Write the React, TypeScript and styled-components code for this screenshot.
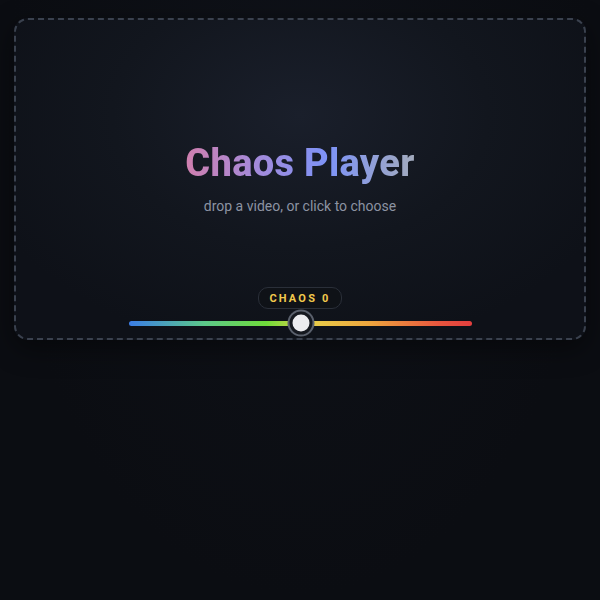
import React, { useState } from "react"
import styled, { createGlobalStyle } from "styled-components"

const GlobalStyle = createGlobalStyle`
    html, body {
        margin: 0;
        padding: 0;
        background: #0b0d12;
        font-family: Roboto, "Liberation Sans", sans-serif;
    }
`

const Page = styled.div`
    width: 600px;
    height: 600px;
    padding: 18px 14px 0;
    box-sizing: border-box;
    background: radial-gradient(ellipse at 50% 20%, #0f1219 0%, #0b0d12 70%);
`

const DropZone = styled.label`
    display: flex;
    flex-direction: column;
    align-items: center;
    height: 322px;
    box-sizing: border-box;
    border: 2px dashed #3a414e;
    border-radius: 14px;
    background: radial-gradient(ellipse 60% 75% at 50% 30%, #1a1f2b 0%, #12161e 55%, #0e1118 100%);
    box-shadow: 0 8px 28px rgba(0, 0, 0, 0.45);
    cursor: pointer;
`

const Center = styled.div`
    flex: 1;
    display: flex;
    flex-direction: column;
    align-items: center;
    justify-content: center;
    padding-top: 48px;
`

const Title = styled.h1`
    margin: 0;
    font-size: 38px;
    font-weight: 800;
    letter-spacing: 0.3px;
    background: linear-gradient(90deg, #d07fae 0%, #a58ad9 30%, #7d93f7 62%, #a3abbd 100%);
    -webkit-background-clip: text;
    background-clip: text;
    color: transparent;
`

const Subtitle = styled.p`
    margin: 13px 0 0;
    font-size: 14px;
    color: #8c93a2;
`

const Controls = styled.div`
    display: flex;
    flex-direction: column;
    align-items: center;
    gap: 2px;
    padding-bottom: 3px;
`

const Pill = styled.div`
    height: 20px;
    padding: 0 10px;
    display: flex;
    align-items: center;
    border: 1px solid #2a2f39;
    border-radius: 10px;
    background: #0f1217;
    color: #f2c94c;
    font-size: 11px;
    font-weight: 700;
    letter-spacing: 2.2px;
`

const Track = styled.div`
    position: relative;
    width: 343px;
    height: 24px;
    display: flex;
    align-items: center;
`

const Bar = styled.div`
    width: 100%;
    height: 5px;
    border-radius: 3px;
    background: linear-gradient(90deg, #3b7de6 0%, #5cc98a 22%, #6fdc3a 40%, #e8d04a 52%, #eea63e 70%, #e8573e 90%, #e23e3e 100%);
`

const Thumb = styled.div`
    position: absolute;
    top: 50%;
    width: 17px;
    height: 17px;
    border-radius: 50%;
    background: #ececef;
    border: 3px solid #15181f;
    box-shadow: 0 0 0 2px #5a606c;
    transform: translate(-50%, -50%);
`

export default function App() {
    const [chaos] = useState(0)
    const pos = (chaos + 100) / 200

    return (
        <>
            <GlobalStyle />
            <Page>
                <DropZone>
                    <Center>
                        <Title>Chaos Player</Title>
                        <Subtitle>drop a video, or click to choose</Subtitle>
                    </Center>
                    <Controls>
                        <Pill>CHAOS {chaos}</Pill>
                        <Track>
                            <Bar />
                            <Thumb style={{ left: `calc(${pos * 100}% + 1px)` }} />
                        </Track>
                    </Controls>
                </DropZone>
            </Page>
        </>
    )
}
